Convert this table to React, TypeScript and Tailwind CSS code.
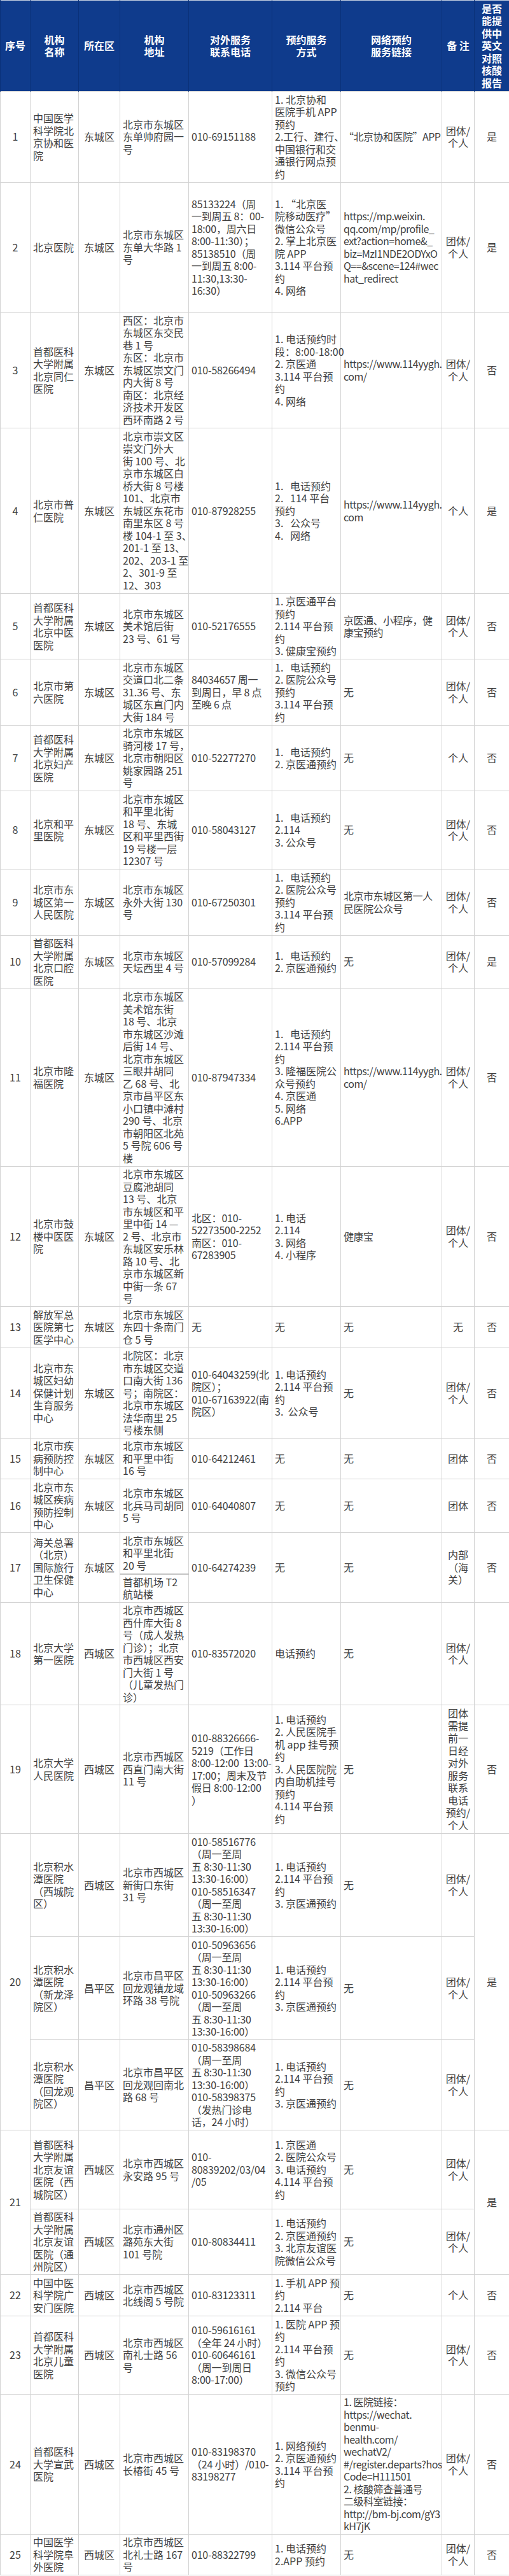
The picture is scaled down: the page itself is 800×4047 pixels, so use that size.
import React from 'react';

type Row = {
  h: string;
  name: string;
  d: string;
  a: string;
  p: string;
  m: string;
  l: string;
  r: string;
  a2?: string;
  h2?: string;
};

type Group = { n: string; c: string; rows: Row[] };

const cell = 'border border-[#d3d3d3] align-middle px-[4px] py-0';

const groups: Group[] = [
  {
    n: '1', c: '是', rows: [{ h: 'h-[143px]', name: '中国医学|科学院北|京协和医|院', d: '东城区', a: '北京市东城区|东单帅府园一|号', p: '010-69151188', m: '1. 北京协和|医院手机 APP|预约|2.工行、建行、|中国银行和交|通银行网点预|约', l: '“北京协和医院”APP', r: '团体/|个人' }],
  },
  {
    n: '2', c: '是', rows: [{ h: 'h-[204px]', name: '北京医院', d: '东城区', a: '北京市东城区|东单大华路 1|号', p: '85133224（周|一到周五 8：00-|18:00，周六日|8:00-11:30）；|85138510（周|一到周五 8:00-|11:30,13:30-|16:30）', m: '1. “北京医|院移动医疗”|微信公众号|2. 掌上北京医|院 APP|3.114 平台预|约|4. 网络', l: 'https://mp.weixin.|qq.com/mp/profile_|ext?action=home&_|biz=MzI1NDE2ODYxO|Q==&scene=124#wec|hat_redirect', r: '团体/|个人' }],
  },
  {
    n: '3', c: '否', rows: [{ h: 'h-[182px]', name: '首都医科|大学附属|北京同仁|医院', d: '东城区', a: '西区：北京市|东城区东交民|巷 1 号|东区：北京市|东城区崇文门|内大街 8 号|南区：北京经|济技术开发区|西环南路 2 号', p: '010-58266494', m: '1. 电话预约时|段：8:00-18:00|2. 京医通|3.114 平台预|约|4. 网络', l: 'https://www.114yygh.|com/', r: '团体/|个人' }],
  },
  {
    n: '4', c: '是', rows: [{ h: 'h-[260px]', name: '北京市普|仁医院', d: '东城区', a: '北京市崇文区|崇文门外大|街 100 号、北|京市东城区白|桥大街 8 号楼|101、北京市|东城区东花市|南里东区 8 号|楼 104-1 至 3、|201-1 至 13、|202、203-1 至|2、301-9 至|12、303', p: '010-87928255', m: '1.   电话预约|2.   114 平台|预约|3.   公众号|4.   网络', l: 'https://www.114yygh.|com', r: '个人' }],
  },
  {
    n: '5', c: '否', rows: [{ h: 'h-[103px]', name: '首都医科|大学附属|北京中医|医院', d: '东城区', a: '北京市东城区|美术馆后街|23 号、61 号', p: '010-52176555', m: '1. 京医通平台|预约|2.114 平台预|约|3. 健康宝预约', l: '京医通、小程序，健|康宝预约', r: '团体/|个人' }],
  },
  {
    n: '6', c: '否', rows: [{ h: 'h-[104px]', name: '北京市第|六医院', d: '东城区', a: '北京市东城区|交道口北二条|31.36 号、东|城区东直门内|大街 184 号', p: '84034657 周一|到周日，早 8 点|至晚 6 点', m: '1.   电话预约|2. 医院公众号|预约|3.114 平台预|约', l: '无', r: '团体/|个人' }],
  },
  {
    n: '7', c: '否', rows: [{ h: 'h-[103px]', name: '首都医科|大学附属|北京妇产|医院', d: '东城区', a: '北京市东城区|骑河楼 17 号，|北京市朝阳区|姚家园路 251|号', p: '010-52277270', m: '1.   电话预约|2. 京医通预约', l: '无', r: '个人' }],
  },
  {
    n: '8', c: '否', rows: [{ h: 'h-[123px]', name: '北京和平|里医院', d: '东城区', a: '北京市东城区|和平里北街|18 号、东城|区和平里西街|19 号楼一层|12307 号', p: '010-58043127', m: '1.   电话预约|2.114|3. 公众号', l: '无', r: '团体/|个人' }],
  },
  {
    n: '9', c: '否', rows: [{ h: 'h-[104px]', name: '北京市东|城区第一|人民医院', d: '东城区', a: '北京市东城区|永外大街 130|号', p: '010-67250301', m: '1.   电话预约|2. 医院公众号|预约|3.114 平台预|约', l: '北京市东城区第一人|民医院公众号', r: '团体/|个人' }],
  },
  {
    n: '10', c: '是', rows: [{ h: 'h-[83px]', name: '首都医科|大学附属|北京口腔|医院', d: '东城区', a: '北京市东城区|天坛西里 4 号', p: '010-57099284', m: '1.   电话预约|2. 京医通预约', l: '无', r: '团体/|个人' }],
  },
  {
    n: '11', c: '否', rows: [{ h: 'h-[280px]', name: '北京市隆|福医院', d: '东城区', a: '北京市东城区|美术馆东街|18 号、北京|市东城区沙滩|后街 14 号、|北京市东城区|三眼井胡同|乙 68 号、北|京市昌平区东|小口镇中滩村|290 号、北京|市朝阳区北苑|5 号院 606 号|楼', p: '010-87947334', m: '1.   电话预约|2.114 平台预|约|3. 隆福医院公|众号预约|4. 京医通|5. 网络|6.APP', l: 'https://www.114yygh.|com/', r: '团体/|个人' }],
  },
  {
    n: '12', c: '否', rows: [{ h: 'h-[220px]', name: '北京市鼓|楼中医医|院', d: '东城区', a: '北京市东城区|豆腐池胡同|13 号、北京|市东城区和平|里中街 14 —|2 号、北京市|东城区安乐林|路 10 号、北|京市东城区新|中街一条 67|号', p: '北区：010-|52273500-2252|南区：010-|67283905', m: '1. 电话|2.114|3. 网络|4. 小程序', l: '健康宝', r: '团体/|个人' }],
  },
  {
    n: '13', c: '否', rows: [{ h: 'h-[65px]', name: '解放军总|医院第七|医学中心', d: '东城区', a: '北京市东城区|东四十条南门|仓 5 号', p: '无', m: '无', l: '无', r: '无' }],
  },
  {
    n: '14', c: '否', rows: [{ h: 'h-[142px]', name: '北京市东|城区妇幼|保健计划|生育服务|中心', d: '东城区', a: '北院区：北京|市东城区交道|口南大街 136|号；南院区：|北京市东城区|法华南里 25|号楼东侧', p: '010-64043259(北|院区）；|010-67163922(南|院区）', m: '1. 电话预约|2.114 平台预|约|3.  公众号', l: '无', r: '团体/|个人' }],
  },
  {
    n: '15', c: '否', rows: [{ h: 'h-[64px]', name: '北京市疾|病预防控|制中心', d: '东城区', a: '北京市东城区|和平里中街|16 号', p: '010-64212461', m: '无', l: '无', r: '团体' }],
  },
  {
    n: '16', c: '否', rows: [{ h: 'h-[84px]', name: '北京市东|城区疾病|预防控制|中心', d: '东城区', a: '北京市东城区|北兵马司胡同|5 号', p: '010-64040807', m: '无', l: '无', r: '团体' }],
  },
  {
    n: '17', c: '否', rows: [{ h: 'h-[65px]', h2: 'h-[45px]', name: '海关总署|（北京）|国际旅行|卫生保健|中心', d: '东城区', a: '北京市东城区|和平里北街|20 号', a2: '首都机场 T2|航站楼', p: '010-64274239', m: '无', l: '无', r: '内部|（海|关）' }],
  },
  {
    n: '18', c: '', rows: [{ h: 'h-[161px]', name: '北京大学|第一医院', d: '西城区', a: '北京市西城区|西什库大街 8|号（成人发热|门诊）；北京|市西城区西安|门大街 1 号|（儿童发热门|诊）', p: '010-83572020', m: '电话预约', l: '无', r: '团体/|个人' }],
  },
  {
    n: '19', c: '否', rows: [{ h: 'h-[202px]', name: '北京大学|人民医院', d: '西城区', a: '北京市西城区|西直门南大街|11 号', p: '010-88326666-|5219（工作日|8:00-12:00  13:00-|17:00；周末及节|假日 8:00-12:00|）', m: '1. 电话预约|2. 人民医院手|机 app 挂号预|约|3. 人民医院院|内自助机挂号|预约|4.114 平台预|约', l: '无', r: '团体|需提|前一|日经|对外|服务|联系|电话|预约/|个人' }],
  },
  {
    n: '20', c: '是', rows: [
      { h: 'h-[162px]', name: '北京积水|潭医院|（西城院|区）', d: '西城区', a: '北京市西城区|新街口东街|31 号', p: '010-58516776|（周一至周|五 8:30-11:30|13:30-16:00）|010-58516347|（周一至周|五 8:30-11:30|13:30-16:00）', m: '1. 电话预约|2.114 平台预|约|3. 京医通预约', l: '无', r: '团体/|个人' },
      { h: 'h-[162px]', name: '北京积水|潭医院|（新龙泽|院区）', d: '昌平区', a: '北京市昌平区|回龙观镇龙域|环路 38 号院', p: '010-50963656|（周一至周|五 8:30-11:30|13:30-16:00）|010-50963266|（周一至周|五 8:30-11:30|13:30-16:00）', m: '1. 电话预约|2.114 平台预|约|3. 京医通预约', l: '无', r: '团体/|个人' },
      { h: 'h-[142px]', name: '北京积水|潭医院|（回龙观|院区）', d: '昌平区', a: '北京市昌平区|回龙观回南北|路 68 号', p: '010-58398684|（周一至周|五 8:30-11:30|13:30-16:00）|010-58398375|（发热门诊电|话，24 小时）', m: '1. 电话预约|2.114 平台预|约|3. 京医通预约', l: '无', r: '团体/|个人' },
    ],
  },
  {
    n: '21', c: '是', rows: [
      { h: 'h-[124px]', name: '首都医科|大学附属|北京友谊|医院（西|城院区）', d: '西城区', a: '北京市西城区|永安路 95 号', p: '010-|80839202/03/04|/05', m: '1. 京医通|2. 医院公众号|3. 电话预约|4.114 平台预|约', l: '无', r: '团体/|个人' },
      { h: 'h-[103px]', name: '首都医科|大学附属|北京友谊|医院（通|州院区）', d: '西城区', a: '北京市通州区|潞苑东大街|101 号院', p: '010-80834411', m: '1. 电话预约|2. 京医通预约|3. 北京友谊医|院微信公众号', l: '无', r: '团体/|个人' },
    ],
  },
  {
    n: '22', c: '否', rows: [{ h: 'h-[65px]', name: '中国中医|科学院广|安门医院', d: '西城区', a: '北京市西城区|北线阁 5 号院', p: '010-83123311', m: '1. 手机 APP 预|约|2.114 平台', l: '无', r: '个人' }],
  },
  {
    n: '23', c: '否', rows: [{ h: 'h-[123px]', name: '首都医科|大学附属|北京儿童|医院', d: '西城区', a: '北京市西城区|南礼士路 56|号', p: '010-59616161|（全年 24 小时）|010-60646161|（周一到周日|8:00-17:00）', m: '1. 医院 APP 预|约|2.114 平台预|约|3. 微信公众号|预约', l: '无', r: '团体/|个人' }],
  },
  {
    n: '24', c: '否', rows: [{ h: 'h-[220px]', name: '首都医科|大学宣武|医院', d: '西城区', a: '北京市西城区|长椿街 45 号', p: '010-83198370|（24 小时）/010-|83198277', m: '1. 网络预约|2. 京医通预约|3.114 平台预|约', l: '1. 医院链接：|https://wechat.|benmu-|health.com/|wechatV2/|#/register.departs?hos|Code=H111501|2. 核酸筛查普通号|二级科室链接：|http://bm-bj.com/gY3|kH7jK', r: '团体/|个人' }],
  },
  {
    n: '25', c: '否', rows: [{ h: 'h-[64px]', name: '中国医学|科学院阜|外医院', d: '西城区', a: '北京市西城区|北礼士路 167|号', p: '010-88322799', m: '1. 电话预约|2.APP 预约', l: '无', r: '团体/|个人' }],
  },
];

const Lines = ({ t }: { t: string }) => (
  <>
    {t.split('|').map((line, i) => (
      <div key={i} className="whitespace-pre">
        {line}
      </div>
    ))}
  </>
);

const headers = ['序号', '机构|名称', '所在区', '机构|地址', '对外服务|联系电话', '预约服务|方式', '网络预约|服务链接', '备 注', '是否|能提|供中|英文|对照|核酸|报告'];

export default function App() {
  return (
    <div className="w-[800px] bg-white font-['Noto_Sans_CJK_SC',sans-serif] text-[16px] leading-[19.5px] text-[#3f3f3f]">
      <table className="w-[800px] table-fixed border-collapse border-t border-t-[#c9d3e4]">
        <colgroup>
          <col className="w-[47px]" />
          <col className="w-[76px]" />
          <col className="w-[65px]" />
          <col className="w-[108px]" />
          <col className="w-[131px]" />
          <col className="w-[108px]" />
          <col className="w-[159px]" />
          <col className="w-[51px]" />
          <col className="w-[55px]" />
        </colgroup>
        <thead>
          <tr className="h-[143px] bg-[#0f3b8c]">
            {headers.map((h, i) => (
              <th key={i} className="border-x border-[#0a3179] px-0 align-middle text-center font-bold text-white">
                <Lines t={h} />
              </th>
            ))}
          </tr>
        </thead>
        <tbody>
          {groups.map((g) => {
            const total = g.rows.reduce((s, r) => s + (r.a2 ? 2 : 1), 0);
            return g.rows.map((r, i) => {
              const span = r.a2 ? 2 : 1;
              return (
                <React.Fragment key={g.n + '-' + i}>
                  <tr className={r.h}>
                    {i === 0 && (
                      <td rowSpan={total} className={cell + ' text-center'}>
                        {g.n}
                      </td>
                    )}
                    <td rowSpan={span} className={cell}>
                      <Lines t={r.name} />
                    </td>
                    <td rowSpan={span} className={cell + ' text-center'}>
                      {r.d}
                    </td>
                    <td className={cell}>
                      <Lines t={r.a} />
                    </td>
                    <td rowSpan={span} className={cell + ' tracking-[-0.2px]'}>
                      <Lines t={r.p} />
                    </td>
                    <td rowSpan={span} className={cell}>
                      <Lines t={r.m} />
                    </td>
                    <td rowSpan={span} className={cell + ' overflow-hidden tracking-[-0.5px]'}>
                      <Lines t={r.l} />
                    </td>
                    <td rowSpan={span} className={cell + ' text-center'}>
                      <Lines t={r.r} />
                    </td>
                    {i === 0 && (
                      <td rowSpan={total} className={cell + ' text-center'}>
                        {g.c}
                      </td>
                    )}
                  </tr>
                  {r.a2 && (
                    <tr className={r.h2}>
                      <td className={cell + ' border-t-2 border-t-[#c4c4c4]'}>
                        <Lines t={r.a2} />
                      </td>
                    </tr>
                  )}
                </React.Fragment>
              );
            });
          })}
        </tbody>
      </table>
    </div>
  );
}
